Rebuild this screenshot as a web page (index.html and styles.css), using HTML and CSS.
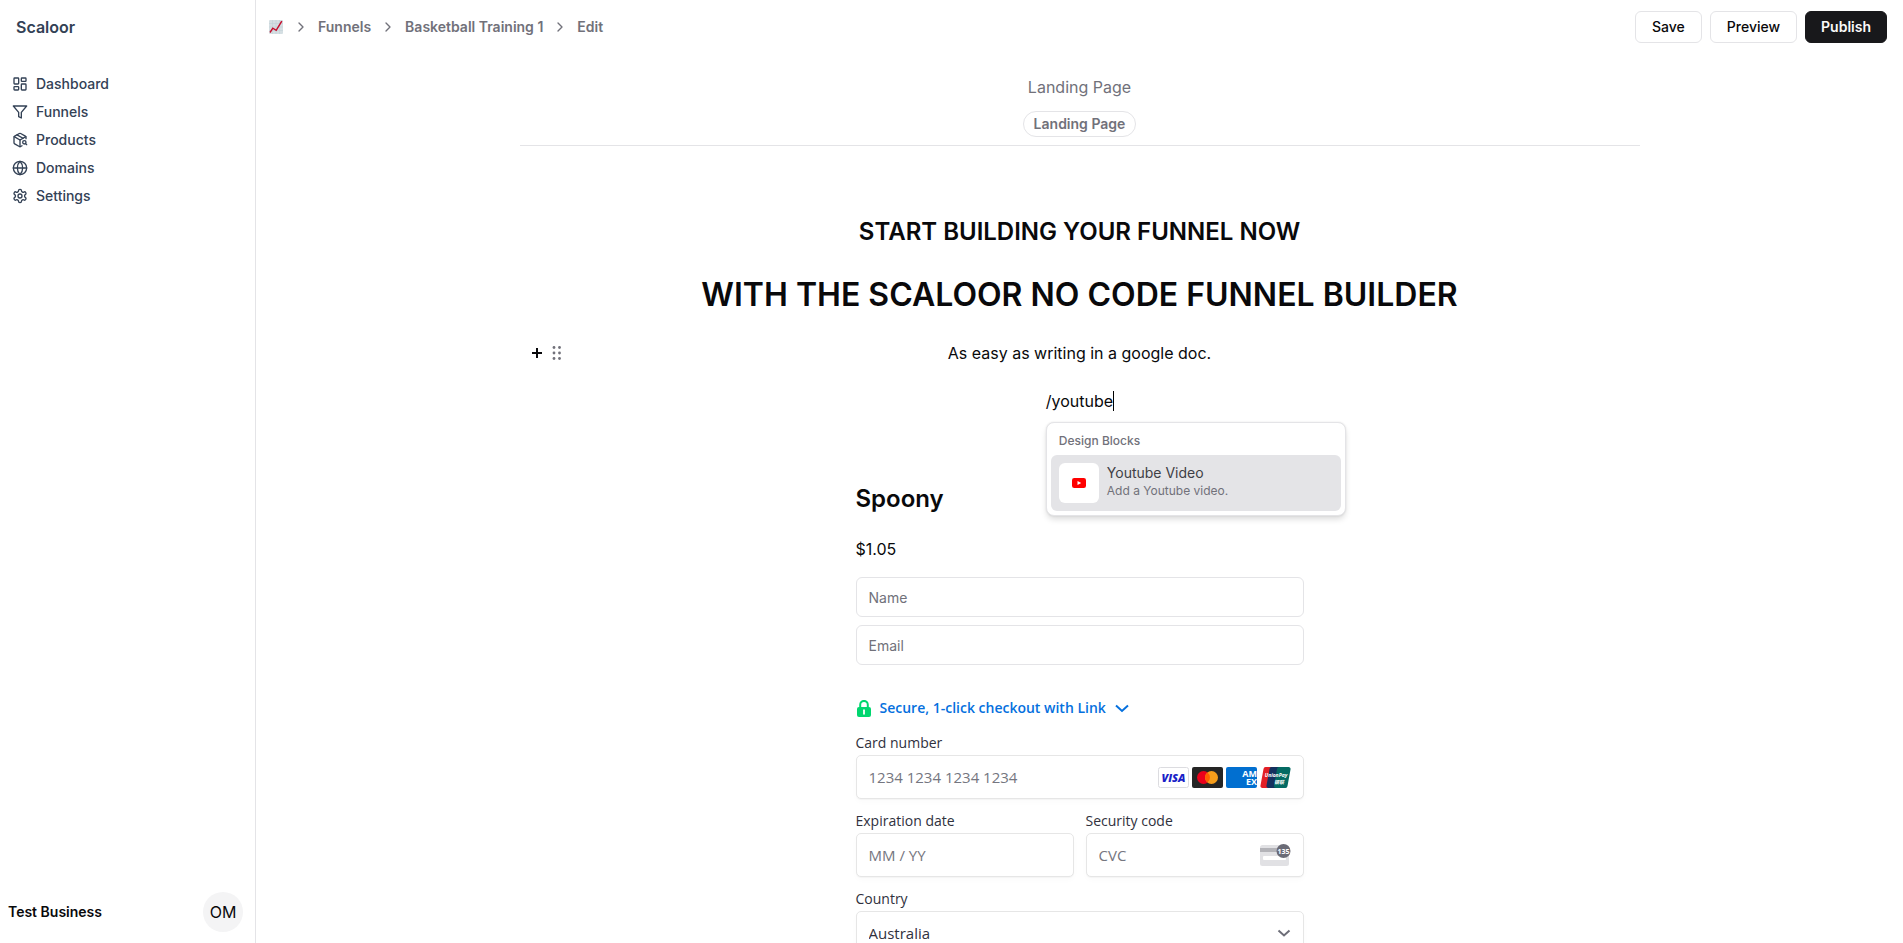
FILE: index.html
```html
<!DOCTYPE html>
<html lang="en">
<head>
<meta charset="utf-8">
<title>Scaloor - Edit funnel</title>
<link rel="stylesheet" href="styles.css">
</head>
<body>
<div class="app">
  <aside class="sidebar">
    <a class="brand" href="#">Scaloor</a>
    <nav class="nav">
      <a class="nav-item" href="#"><svg class="icon" viewBox="0 0 24 24"><rect width="7" height="9" x="3" y="3" rx="1"/><rect width="7" height="5" x="14" y="3" rx="1"/><rect width="7" height="9" x="14" y="12" rx="1"/><rect width="7" height="5" x="3" y="16" rx="1"/></svg>Dashboard</a>
      <a class="nav-item" href="#"><svg class="icon" viewBox="0 0 24 24"><path d="M22 3H2l8 9.46V19l4 2v-8.54L22 3z"/></svg>Funnels</a>
      <a class="nav-item" href="#"><svg class="icon" viewBox="0 0 24 24"><path d="M21 10V8a2 2 0 0 0-1-1.73l-7-4a2 2 0 0 0-2 0l-7 4A2 2 0 0 0 3 8v8a2 2 0 0 0 1 1.73l7 4a2 2 0 0 0 2 0l2-1.14"/><path d="m7.5 4.27 9 5.15"/><path d="M3.29 7 12 12l8.71-5"/><path d="M12 22V12"/><circle cx="18.5" cy="15.5" r="2.5"/><path d="M20.27 17.27 22 19"/></svg>Products</a>
      <a class="nav-item" href="#"><svg class="icon" viewBox="0 0 24 24"><circle cx="12" cy="12" r="10"/><path d="M12 2a14.5 14.5 0 0 0 0 20 14.5 14.5 0 0 0 0-20"/><path d="M2 12h20"/></svg>Domains</a>
      <a class="nav-item" href="#"><svg class="icon" viewBox="0 0 24 24"><path d="M12.22 2h-.44a2 2 0 0 0-2 2v.18a2 2 0 0 1-1 1.73l-.43.25a2 2 0 0 1-2 0l-.15-.08a2 2 0 0 0-2.73.73l-.22.38a2 2 0 0 0 .73 2.73l.15.1a2 2 0 0 1 1 1.72v.51a2 2 0 0 1-1 1.74l-.15.09a2 2 0 0 0-.73 2.73l.22.38a2 2 0 0 0 2.73.73l.15-.08a2 2 0 0 1 2 0l.43.25a2 2 0 0 1 1 1.73V20a2 2 0 0 0 2 2h.44a2 2 0 0 0 2-2v-.18a2 2 0 0 1 1-1.73l.43-.25a2 2 0 0 1 2 0l.15.08a2 2 0 0 0 2.73-.73l.22-.39a2 2 0 0 0-.73-2.73l-.15-.08a2 2 0 0 1-1-1.74v-.5a2 2 0 0 1 1-1.74l.15-.09a2 2 0 0 0 .73-2.73l-.22-.38a2 2 0 0 0-2.73-.73l-.15.08a2 2 0 0 1-2 0l-.43-.25a2 2 0 0 1-1-1.73V4a2 2 0 0 0-2-2z"/><circle cx="12" cy="12" r="3"/></svg>Settings</a>
    </nav>
    <div class="account">
      <span class="account-name">Test Business</span>
      <button class="avatar" type="button">OM</button>
    </div>
  </aside>

  <div class="main">
    <header class="topbar">
      <nav class="crumbs">
        <a class="crumb" href="#" aria-label="Home"><svg class="chart" viewBox="0 0 14 14"><rect width="14" height="14" rx="1" fill="#d5dfe3"/><path d="M3.500 0v14M7 0v14M10.500 0v14M0 3.500h14M0 7h14M0 10.500h14" stroke="#c3d1d7" stroke-width=".6"/><path d="M1 12.500 3.800 8.200 7.200 10.300 12.800 1.200" fill="none" stroke="#c50f2e" stroke-width="1.500"/></svg></a>
        <svg class="sep" viewBox="0 0 24 24"><path d="m9 18 6-6-6-6"/></svg>
        <a class="crumb" href="#">Funnels</a>
        <svg class="sep" viewBox="0 0 24 24"><path d="m9 18 6-6-6-6"/></svg>
        <a class="crumb" href="#">Basketball Training 1</a>
        <svg class="sep" viewBox="0 0 24 24"><path d="m9 18 6-6-6-6"/></svg>
        <a class="crumb" href="#">Edit</a>
      </nav>
      <div class="actions">
        <button class="btn" type="button">Save</button>
        <button class="btn" type="button">Preview</button>
        <button class="btn btn-primary" type="button">Publish</button>
      </div>
    </header>

    <main class="page">
      <div class="page-head">
        <span class="page-name">Landing Page</span>
        <span class="badge">Landing Page</span>
      </div>

      <div class="editor">
        <h2 class="title">START BUILDING YOUR FUNNEL NOW</h2>
        <h1 class="headline">WITH THE SCALOOR NO CODE FUNNEL BUILDER</h1>
        <div class="block">
          <div class="handles">
            <button class="handle" type="button" aria-label="Add block"><svg class="plus" viewBox="0 0 16 16"><path d="M8 3v10M3 8h10"/></svg></button>
            <button class="handle" type="button" aria-label="Drag block"><svg class="grip" viewBox="0 0 16 16"><circle cx="5" cy="2.500" r="1.400"/><circle cx="10.500" cy="2.500" r="1.400"/><circle cx="5" cy="8" r="1.400"/><circle cx="10.500" cy="8" r="1.400"/><circle cx="5" cy="13.500" r="1.400"/><circle cx="10.500" cy="13.500" r="1.400"/></svg></button>
          </div>
          <p class="text">As easy as writing in a google doc.</p>
        </div>
        <div class="command">
          <p class="text">/youtube<span class="caret"></span></p>
          <div class="menu">
            <div class="menu-title">Design Blocks</div>
            <button class="menu-item" type="button">
              <span class="menu-icon"><svg class="yt" viewBox="0 0 14 10"><rect width="14" height="10" rx="2.200" fill="#f00"/><path d="M5.500 3v4L9.200 5z" fill="#fff"/></svg></span>
              <span class="menu-text"><span class="menu-name">Youtube Video</span><span class="menu-desc">Add a Youtube video.</span></span>
            </button>
          </div>
        </div>
      </div>

      <form class="checkout">
        <h2 class="title">Spoony</h2>
        <p class="price">$1.05</p>
        <div class="contact">
          <input class="input" type="text" placeholder="Name" aria-label="Name">
          <input class="input" type="email" placeholder="Email" aria-label="Email">
        </div>
        <button class="link-row" type="button">
          <svg class="lock" viewBox="0 0 14 17"><path d="M3.200 8V4.700a3.800 3.800 0 0 1 7.600 0V8" fill="none" stroke="#00d66f" stroke-width="2"/><rect y="7" width="14" height="10" rx="2" fill="#00d66f"/><path d="M7 10.200v3.600" stroke="#fff" stroke-width="1.800" stroke-linecap="round"/></svg>
          <span>Secure, 1-click checkout with Link</span>
          <svg class="chev chev-blue" viewBox="0 0 14 14"><path d="m1 4.500 6 5.500 6-5.500"/></svg>
        </button>
        <div class="fields">
          <div class="field wide">
            <label class="label" for="card">Card number</label>
            <div class="control">
              <input class="bare" id="card" type="text" placeholder="1234 1234 1234 1234">
              <div class="cards">
                <svg class="card" viewBox="0 0 31 21"><rect x=".5" y=".5" width="30" height="20" rx="2" fill="#fff" stroke="#dcdce0"/><text x="15.500" y="14.800" class="visa">VISA</text></svg>
                <svg class="card" viewBox="0 0 31 21"><rect width="31" height="21" rx="2" fill="#252525"/><circle cx="11.500" cy="10.500" r="6.500" fill="#eb001b"/><circle cx="19.500" cy="10.500" r="6.500" fill="#f79e1b"/><path d="M15.500 5.400a6.500 6.500 0 0 1 0 10.200 6.500 6.500 0 0 1 0-10.200z" fill="#ff5f00"/></svg>
                <svg class="card" viewBox="0 0 31 21"><rect width="31" height="21" rx="2" fill="#016fd0"/><text x="31" y="10" class="amex">AM</text><text x="31" y="17.500" class="amex">EX</text></svg>
                <svg class="card" viewBox="0 0 31 21"><path d="M5.500 0H14L10 21H2.500a2 2 0 0 1-2-2.500l3-16.500a2.300 2.300 0 0 1 2-2z" fill="#e21f26"/><path d="M11.500 0H20l-4 21H8.500a2 2 0 0 1-2-2.500l3-16.500a2.300 2.300 0 0 1 2-2z" fill="#14315f"/><path d="M19 0h9.500a2 2 0 0 1 2 2.500l-3 16.500a2.300 2.300 0 0 1-2 2H16a2 2 0 0 1-2-2.500L17 2a2.300 2.300 0 0 1 2-2z" fill="#046a63"/><text x="16" y="9.500" class="union">UnionPay</text><text x="19" y="17.300" class="union">银联</text></svg>
              </div>
            </div>
          </div>
          <div class="field">
            <label class="label" for="exp">Expiration date</label>
            <div class="control"><input class="bare" id="exp" type="text" placeholder="MM / YY"></div>
          </div>
          <div class="field">
            <label class="label" for="cvc">Security code</label>
            <div class="control">
              <input class="bare" id="cvc" type="text" placeholder="CVC">
              <svg class="cvc" viewBox="0 0 31 22"><rect y="1" width="29" height="21" rx="2.500" fill="#e1e1e4"/><path d="M0 4h29v4H0z" fill="#b3b3b8"/><rect x="3" y="12" width="23" height="4" rx="1" fill="#fff"/><circle cx="23.500" cy="7" r="7" fill="#6b6b76"/><text x="23.500" y="10" class="digits">135</text></svg>
            </div>
          </div>
          <div class="field wide">
            <label class="label" for="country">Country</label>
            <div class="control">
              <select class="bare select" id="country"><option>Australia</option></select>
              <svg class="chev chev-grey" viewBox="0 0 14 14"><path d="m1.500 4.500 5.500 5 5.500-5"/></svg>
            </div>
          </div>
        </div>
      </form>
    </main>
  </div>
</div>
</body>
</html>
```
FILE: styles.css
```css
* { box-sizing: border-box; margin: 0; padding: 0; }
body { font: 16px/24px Inter, "Liberation Sans", sans-serif; color: #09090b; background: #fff; }
a { color: inherit; text-decoration: none; }
button, input, select { font: inherit; color: inherit; border: 0; background: none; outline: 0; }
button { cursor: pointer; }
svg { display: block; flex: none; }

.app { display: flex; height: 100vh; overflow: hidden; }

.sidebar { display: flex; flex-direction: column; flex: none; width: 256px; border-right: 1px solid #e4e4e7; color: #334155; }
.brand { padding: 15px 16px; font-weight: 600; }
.nav { display: flex; flex-direction: column; gap: 8px; padding: 20px 12px; }
.nav-item { display: flex; align-items: center; gap: 8px; font-size: 14px; line-height: 20px; font-weight: 500; }
.icon { width: 16px; height: 16px; fill: none; stroke: currentColor; stroke-width: 2; stroke-linecap: round; stroke-linejoin: round; }
.account { display: flex; align-items: center; justify-content: space-between; margin-top: auto; padding: 0 12px 11px 8px; color: #09090b; }
.account-name { font-size: 14px; font-weight: 600; }
.avatar { width: 40px; height: 40px; border-radius: 50%; background: #f4f4f5; }

.main { flex: 1; min-width: 0; }
.topbar { display: flex; align-items: center; justify-content: space-between; height: 54px; padding: 0 16px 0 12px; }
.crumbs { display: flex; align-items: center; gap: 9px; font-size: 14px; line-height: 20px; font-weight: 600; color: #71717a; }
.chart { width: 16px; height: 14px; }
.sep { width: 16px; height: 16px; fill: none; stroke: currentColor; stroke-width: 2; stroke-linecap: round; stroke-linejoin: round; }
.actions { display: flex; gap: 8px; }
.btn { height: 32px; padding: 0 16px; border: 1px solid #e4e4e7; border-radius: 6px; font-size: 14px; line-height: 20px; font-weight: 500; }
.btn-primary { padding: 0 15px; background: #18181b; border-color: #18181b; color: #fafafa; font-weight: 600; }

.page { max-width: 1120px; margin: 0 auto; }
.page-head { display: flex; flex-direction: column; align-items: center; gap: 12px; padding: 21px 0 8px; border-bottom: 1px solid #e4e4e7; color: #71717a; }
.badge { padding: 2px 10px; border: 1px solid #e4e4e7; border-radius: 13px; font-size: 14px; line-height: 20px; font-weight: 600; }

.editor { display: flex; flex-direction: column; align-items: center; padding-top: 70px; }
.title { font-size: 24px; line-height: 32px; font-weight: 600; }
.headline { margin-top: 27px; font-size: 32px; line-height: 40px; font-weight: 600; }
.block { display: grid; grid-template-columns: 1fr auto 1fr; align-items: center; width: 100%; margin-top: 26px; }
.handles { display: flex; gap: 4px; padding-left: 9px; }
.handle { width: 16px; height: 16px; }
.plus { width: 16px; height: 16px; stroke: #09090b; stroke-width: 2; }
.grip { width: 16px; height: 16px; fill: #71717a; }
.command { position: relative; margin-top: 24px; }
.command .text { display: flex; align-items: center; }
.caret { width: 1px; height: 20px; margin-right: -1px; background: #000; }
.menu { position: absolute; left: 0; top: 33px; width: 300px; padding: 4px; border: 1px solid #e4e4e7; border-radius: 8px; background: #fff; box-shadow: 0 4px 6px -1px rgba(0, 0, 0, .15), 0 0 2px rgba(0, 0, 0, .1); }
.menu-title { padding: 6px 8px; font-size: 12px; line-height: 16px; font-weight: 500; color: #71717a; }
.menu-item { display: flex; align-items: center; gap: 8px; width: 100%; padding: 8px; border-radius: 6px; background: #e4e4e7; text-align: left; }
.menu-icon { display: grid; place-items: center; width: 40px; height: 40px; border-radius: 6px; background: #fff; }
.yt { width: 14px; height: 10px; }
.menu-text { display: flex; flex-direction: column; padding-bottom: 4px; }
.menu-name { font-size: 14px; line-height: 20px; color: #3f3f46; }
.menu-desc { font-size: 12px; line-height: 16px; color: #71717a; }

.checkout { display: flex; flex-direction: column; max-width: 448px; margin: 70px auto 0; }
.price { margin-top: 22px; }
.contact { display: flex; flex-direction: column; gap: 8px; margin-top: 16px; }
.input { width: 100%; height: 40px; padding: 0 12px; border: 1px solid #e4e4e7; border-radius: 6px; font-size: 14px; }
.input::placeholder { color: #71717a; }
.link-row { display: flex; align-items: center; gap: 9px; margin-top: 33px; padding-left: 1px; font: 600 14px/20px "Open Sans", "Noto Sans", sans-serif; color: #0570de; }
.lock { width: 14px; height: 17px; }
.chev { width: 14px; height: 14px; fill: none; stroke-width: 2; }
.chev-blue { stroke: #0570de; }
.chev-grey { position: absolute; right: 12px; stroke: #6d6e78; pointer-events: none; }
.fields { display: grid; grid-template-columns: repeat(2, minmax(0, 1fr)); gap: 12px; margin-top: 15px; font-family: "Open Sans", "Noto Sans", sans-serif; color: #30313d; }
.wide { grid-column: 1 / -1; }
.label { display: block; margin-bottom: 2px; font-size: 14px; line-height: 20px; }
.control { position: relative; display: flex; align-items: center; height: 44px; padding: 0 12px; border: 1px solid #e6e6e6; border-radius: 5px; background: #fff; box-shadow: 0 1px 1px rgba(0, 0, 0, .03), 0 3px 6px rgba(0, 0, 0, .02); }
.bare { flex: 1; min-width: 0; height: 100%; font-size: 15px; appearance: none; }
.bare::placeholder { color: #757680; }
.cards { display: flex; gap: 3px; }
.card { width: 31px; height: 21px; }
.cvc { width: 31px; height: 22px; }
.visa { font: italic 800 11px "Open Sans", sans-serif; fill: #1a1fc8; text-anchor: middle; }
.amex { font: 700 9px "Open Sans", sans-serif; fill: #fff; text-anchor: end; }
.union { font: italic 700 5px "Open Sans", "Noto Sans CJK SC", sans-serif; fill: #fff; text-anchor: middle; }
.digits { font: 700 7px "Open Sans", sans-serif; fill: #fff; text-anchor: middle; }
```
